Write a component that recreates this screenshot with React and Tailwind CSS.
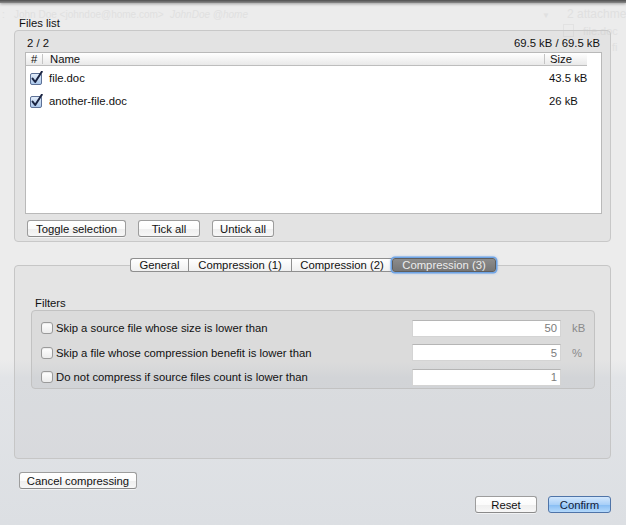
import React from "react";

function CheckedBox() {
  return (
    <svg width="14" height="14" viewBox="0 0 14 14" className="shrink-0">
      <defs>
        <linearGradient id="cbg" x1="0" y1="0" x2="0" y2="1">
          <stop offset="0" stopColor="#e4eefa" />
          <stop offset="1" stopColor="#a9c6ea" />
        </linearGradient>
      </defs>
      <rect x="0.5" y="2.5" width="11" height="11" rx="1.5" fill="url(#cbg)" stroke="#5d7196" />
      <path d="M2.6 7.6 L5.2 11 L11.8 0.8" fill="none" stroke="#1a2442" strokeWidth="2" strokeLinecap="round" strokeLinejoin="round" />
    </svg>
  );
}

function EmptyBox() {
  return (
    <span className="block w-[12px] h-[12px] rounded-[3px] border border-[#9a9a9a] bg-[linear-gradient(to_bottom,#ffffff,#ececec)] shadow-[inset_0_1px_1px_rgba(0,0,0,0.08)] shrink-0" />
  );
}

function AquaButton({ children, className = "" }) {
  return (
    <div
      className={
        "h-[17px] flex items-center justify-center rounded-[3px] border border-[#9d9d9d] border-b-[#8a8a8a] bg-[linear-gradient(to_bottom,#ffffff_0%,#fbfbfb_50%,#eeeeee_51%,#f7f7f7_100%)] shadow-[0_1px_0_rgba(255,255,255,0.6)] text-[#111] " +
        className
      }
    >
      {children}
    </div>
  );
}

function FilterRow({ label, value, unit }) {
  return (
    <div className="h-[20px] flex items-center">
      <div className="ml-[9px]">
        <EmptyBox />
      </div>
      <div className="ml-[3px] flex-1 text-[#111]">{label}</div>
      <div className="w-[149px] h-[17px] bg-white border border-[#d4d4d4] border-t-[#b5b5b5] flex items-center justify-end pr-[3px] text-[#7c7c7c]">
        {value}
      </div>
      <div className="w-[33px] pl-[11px] text-[#8a8a8a]">{unit}</div>
    </div>
  );
}

export default function App() {
  return (
    <div className="relative w-[626px] h-[525px] overflow-hidden bg-[linear-gradient(to_bottom,#ececec_0px,#ececec_360px,#e2e4e7_378px,#dcdfe3_525px)] font-['Liberation_Sans',Arial,sans-serif] text-[11.3px] leading-[14px] text-[#111]">
      {/* faint content of the window behind the sheet */}
      <div className="absolute inset-0 pointer-events-none text-[#e0e0e0]">
        <div className="absolute left-[2px] top-[8px] text-[10px]">:</div>
        <div className="absolute left-[14px] top-[8px] text-[10px] whitespace-nowrap">John Doe &lt;johndoe@home.com&gt;</div>
        <div className="absolute left-[170px] top-[8px] text-[10px] italic whitespace-nowrap">JohnDoe @home</div>
        <div className="absolute left-[542px] top-[9px] text-[8px]">▼</div>
        <div className="absolute left-[567px] top-[7px] text-[12px] whitespace-nowrap">2 attachments</div>
        <div className="absolute left-[563px] top-[24px] w-[11px] h-[13px] border border-[#e2e2e2]" />
        <div className="absolute left-[583px] top-[24px] text-[11px]">file.doc</div>
        <div className="absolute left-[612px] top-[40px] text-[11px] whitespace-nowrap">fi</div>
      </div>

      <div className="relative flex flex-col">
        <div className="h-[3px] bg-[linear-gradient(to_bottom,#4e4e4e,#8a8a8a)] shadow-[0_1px_3px_rgba(0,0,0,0.35)]" />

        <div className="mt-[13px] ml-[19px] h-[14px]">Files list</div>

        {/* Files list group box */}
        <div className="ml-[14px] w-[597px] h-[212px] rounded-[4px] border border-[#c8c8c8] bg-black/[0.035] flex flex-col">
          <div className="mt-[5px] h-[14px] pl-[12px] pr-[10px] flex justify-between">
            <span>2 / 2</span>
            <span>69.5 kB / 69.5 kB</span>
          </div>
          <div className="mt-[2px] ml-[10px] w-[577px] h-[162px] bg-white border border-[#b9b9b9] flex flex-col">
            <div className="w-[561px] h-[13px] flex items-center bg-[linear-gradient(to_bottom,#ffffff,#e9e9e9)] border-b border-[#bdbdbd]">
              <div className="w-[16px] pl-[5px]">#</div>
              <div className="w-px h-[10px] bg-[#c4c4c4]" />
              <div className="flex-1 pl-[7px]">Name</div>
              <div className="w-px h-[10px] bg-[#c4c4c4]" />
              <div className="w-[42px] pl-[5px]">Size</div>
            </div>
            <div className="h-[23px] flex items-center">
              <div className="pl-[4px] w-[23px]">
                <CheckedBox />
              </div>
              <div className="flex-1">file.doc</div>
              <div className="w-[52px]">43.5 kB</div>
            </div>
            <div className="h-[23px] flex items-center">
              <div className="pl-[4px] w-[23px]">
                <CheckedBox />
              </div>
              <div className="flex-1">another-file.doc</div>
              <div className="w-[52px]">26 kB</div>
            </div>
          </div>
          <div className="mt-[6px] ml-[12px] flex gap-[12px]">
            <AquaButton className="w-[99px]">Toggle selection</AquaButton>
            <AquaButton className="w-[62px]">Tick all</AquaButton>
            <AquaButton className="w-[62px]">Untick all</AquaButton>
          </div>
        </div>

        {/* Tabs */}
        <div className="mt-[16px] ml-[14px] w-[597px] flex flex-col">
          <div className="relative z-10 h-[14px] -mb-[7px] flex justify-center">
            <div className="flex h-[14px] pl-[1px]">
              <div className="w-[58px] flex items-center justify-center rounded-l-[3px] border border-[#8f8f8f] border-r-0 bg-[linear-gradient(to_bottom,#ffffff,#f0f0f0)]">
                General
              </div>
              <div className="w-px bg-[#8f8f8f]" />
              <div className="w-[102px] flex items-center justify-center border-y border-[#8f8f8f] bg-[linear-gradient(to_bottom,#ffffff,#f0f0f0)]">
                Compression (1)
              </div>
              <div className="w-px bg-[#8f8f8f]" />
              <div className="w-[100px] flex items-center justify-center border-y border-[#8f8f8f] bg-[linear-gradient(to_bottom,#ffffff,#f0f0f0)]">
                Compression (2)
              </div>
              <div className="w-[104px] flex items-center justify-center rounded-[3px] border border-[#5e5e5e] bg-[linear-gradient(to_bottom,#8c8c8c,#767676)] text-[#ececec] shadow-[0_0_0_1.5px_#6ea4e6,0_0_3px_1px_rgba(90,150,230,0.6)]">
                Compression (3)
              </div>
            </div>
          </div>
          <div className="h-[194px] rounded-[4px] border border-[#c6c6c6] bg-black/[0.03] flex flex-col">
            <div className="mt-[30px] ml-[20px] h-[14px]">Filters</div>
            <div className="ml-[16px] w-[564px] h-[79px] rounded-[4px] border border-[#c2c2c2] bg-black/[0.035] pt-[7px] flex flex-col gap-[4.5px]">
              <FilterRow label="Skip a source file whose size is lower than" value="50" unit="kB" />
              <FilterRow label="Skip a file whose compression benefit is lower than" value="5" unit="%" />
              <FilterRow label="Do not compress if source files count is lower than" value="1" unit="" />
            </div>
          </div>
        </div>

        <div className="mt-[13px] ml-[19px] flex">
          <AquaButton className="w-[118px]">Cancel compressing</AquaButton>
        </div>

        <div className="mt-[7px] pr-[15px] flex justify-end gap-[11px]">
          <AquaButton className="w-[62px]">Reset</AquaButton>
          <div className="w-[63px] h-[17px] flex items-center justify-center rounded-[3px] border border-[#4f74a8] bg-[linear-gradient(to_bottom,#d3e7fc_0%,#a9d0f8_50%,#86bcf3_51%,#b4d9fb_100%)] text-[#10203a]">
            Confirm
          </div>
        </div>
      </div>
    </div>
  );
}
